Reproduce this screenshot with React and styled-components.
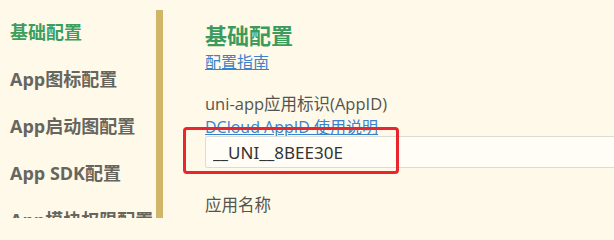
import styled, { createGlobalStyle } from "styled-components";

const GlobalStyle = createGlobalStyle`
  html, body {
    margin: 0;
    padding: 0;
    background: #fef9e9;
    overflow: hidden;
  }
  body {
    font-family: "Open Sans", "Noto Sans CJK SC", sans-serif;
  }
`;

const menu = ["基础配置", "App图标配置", "App启动图配置", "App SDK配置", "App模块权限配置"];

export default function App() {
  return (
    <>
      <GlobalStyle />
      <Page>
        <Sidebar>
          {menu.map((item, i) => (
            <NavItem key={item} $active={i === 0}>{item}</NavItem>
          ))}
        </Sidebar>
        <Divider />
        <Content>
          <Heading>基础配置</Heading>
          <Link href="#">配置指南</Link>

          <Label>uni-app应用标识(AppID)</Label>
          <SubLink href="#">DCloud AppID 使用说明</SubLink>
          <Field>
            <Input readOnly value="__UNI__8BEE30E" />
            <Highlight />
          </Field>

          <Label $gap={26}>应用名称</Label>
        </Content>
      </Page>
    </>
  );
}

const Page = styled.div`
  display: flex;
  height: 218px;
  overflow: hidden;
`;

const Sidebar = styled.nav`
  width: 156px;
  flex-shrink: 0;
  padding-top: 9px;
  display: flex;
  flex-direction: column;
`;

const NavItem = styled.div`
  height: 47px;
  line-height: 47px;
  padding-left: 10px;
  font-size: 18px;
  font-weight: 700;
  white-space: nowrap;
  color: ${(p) => (p.$active ? "#3c9e5e" : "#66665e")};
`;

const Divider = styled.div`
  width: 7px;
  flex-shrink: 0;
  margin-top: 10px;
  background: #d1b66a;
`;

const Content = styled.main`
  flex: 1;
  padding-left: 42px;
  padding-top: 22px;
  display: flex;
  flex-direction: column;
  align-items: flex-start;
`;

const Heading = styled.h2`
  margin: 0;
  font-size: 22px;
  line-height: 26px;
  font-weight: 700;
  color: #3b9b5c;
`;

const Link = styled.a`
  margin-top: 4px;
  font-size: 16px;
  line-height: 20px;
  color: #3a82cc;
  text-decoration: underline;
`;

const Label = styled.div`
  margin-top: ${(p) => p.$gap ?? 21}px;
  font-size: 16.5px;
  line-height: 22px;
  color: #555550;
`;

const SubLink = styled(Link)`
  margin-top: 2px;
`;

const Field = styled.div`
  position: relative;
  margin-top: -1px;
`;

const Input = styled.input`
  display: block;
  box-sizing: border-box;
  width: 520px;
  height: 32px;
  padding: 0 7px;
  border: 1px solid #dcdcd6;
  border-radius: 2px;
  background: #fffdf6;
  font-family: "Noto Sans", "Noto Sans CJK SC", sans-serif;
  font-size: 17px;
  color: #333;
  outline: none;
`;

const Highlight = styled.div`
  position: absolute;
  left: -22px;
  top: -9px;
  width: 216px;
  height: 47px;
  box-sizing: border-box;
  border: 3px solid #e8262b;
  border-radius: 4px;
  pointer-events: none;
`;
